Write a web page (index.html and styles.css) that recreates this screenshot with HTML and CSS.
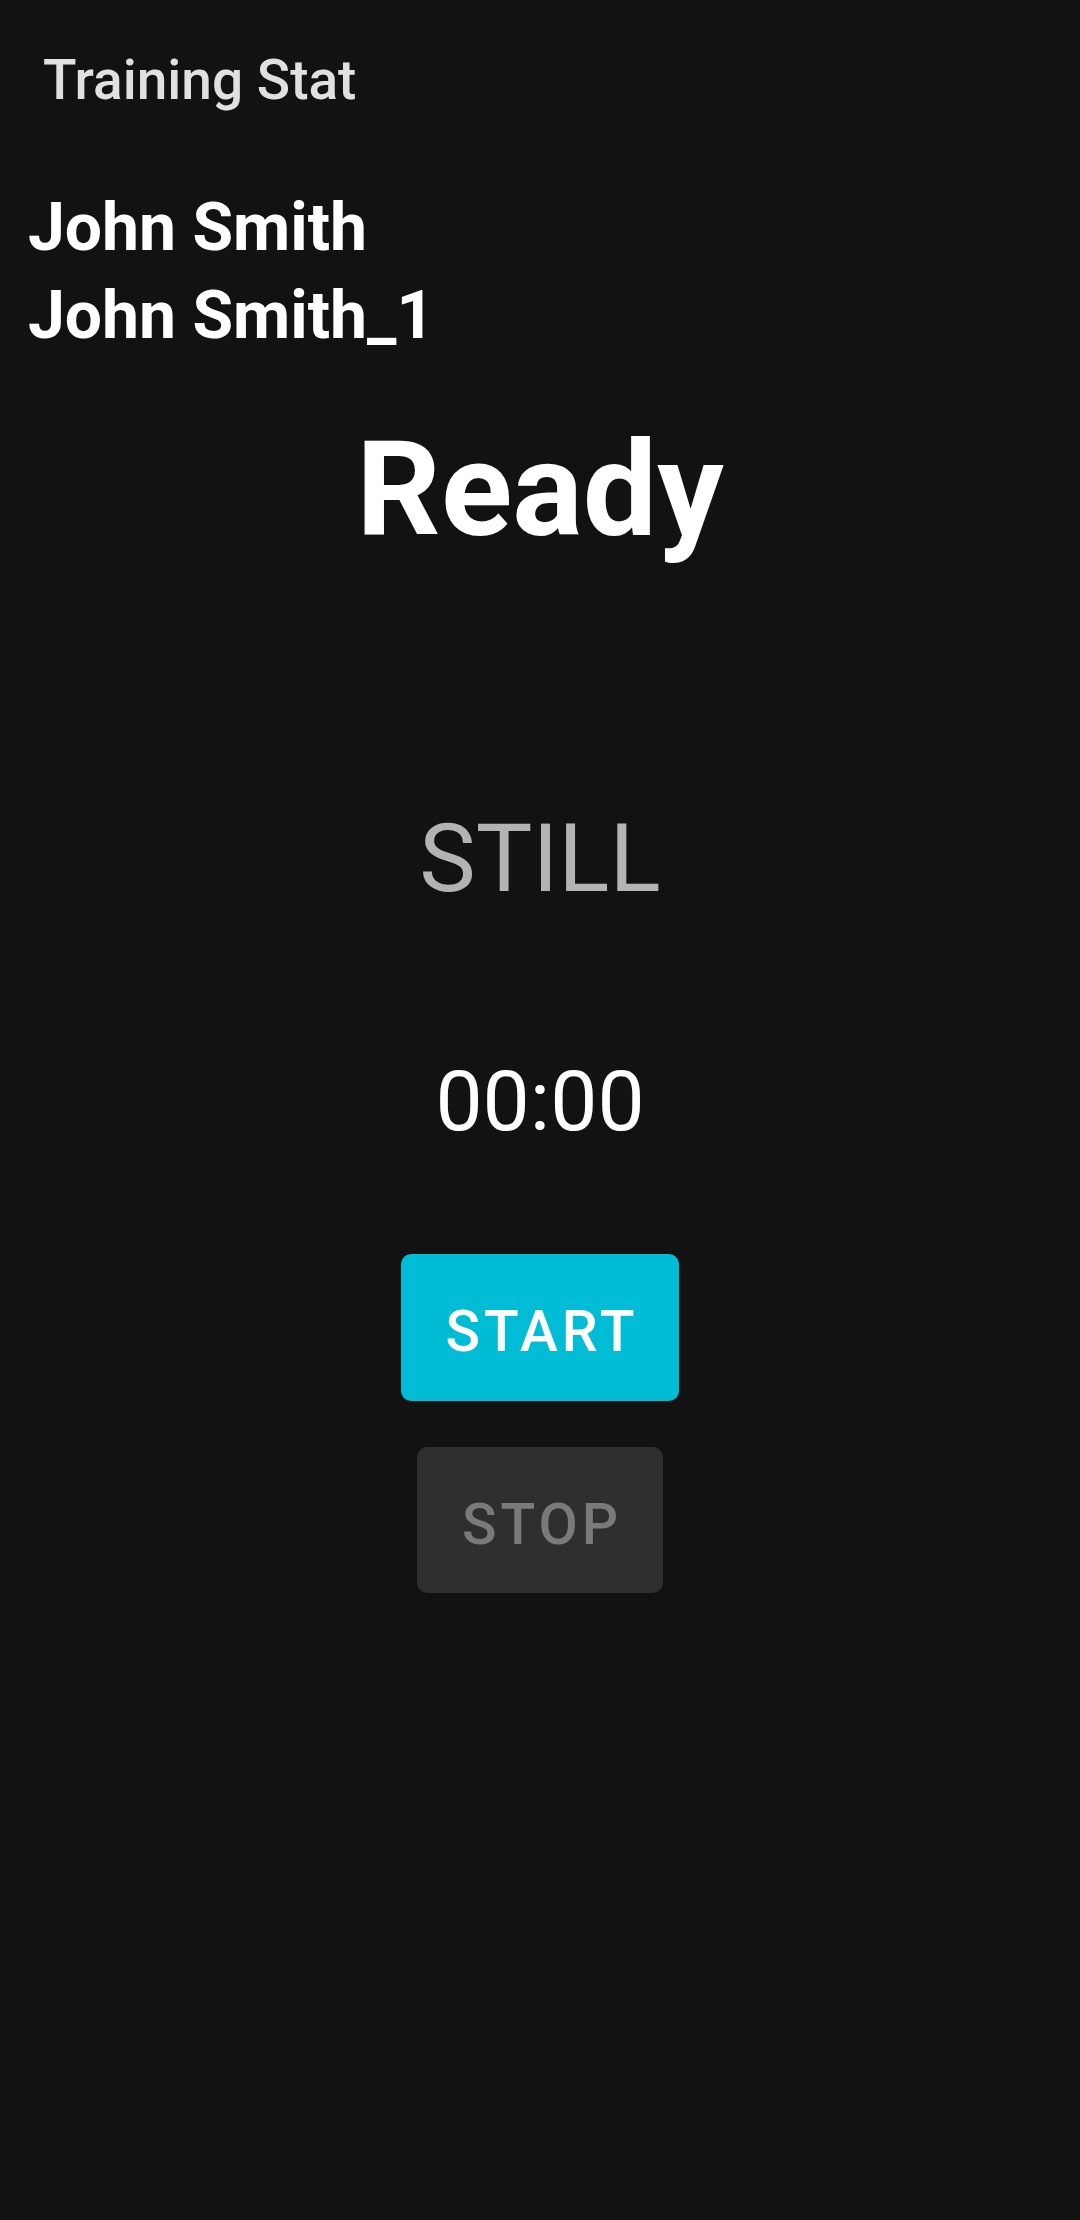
FILE: index.html
```html
<!DOCTYPE html>
<html lang="en">
<head>
<meta charset="utf-8">
<title>Training Stat</title>
<link rel="stylesheet" href="styles.css">
</head>
<body>
<div class="screen">
  <header class="appbar">
    <h1 class="appbar-title">Training Stat</h1>
  </header>
  <section class="names">
    <div class="name">John Smith</div>
    <div class="name">John Smith_1</div>
  </section>
  <main class="panel">
    <div class="status">Ready</div>
    <div class="activity">STILL</div>
    <div class="timer">00:00</div>
    <button class="btn btn-start" type="button">START</button>
    <button class="btn btn-stop" type="button" disabled>STOP</button>
  </main>
</div>
</body>
</html>
```

FILE: styles.css
```css
html, body {
  margin: 0;
  padding: 0;
  background: #121212;
}
body {
  font-family: Roboto, "Noto Sans", "Liberation Sans", sans-serif;
  color: #ffffff;
  width: 1080px;
  min-height: 2220px;
}
.screen {
  display: flex;
  flex-direction: column;
}
.appbar {
  padding: 48px 0 0 43px;
}
.appbar-title {
  margin: 0;
  font-size: 55px;
  font-weight: 500;
  line-height: normal;
  color: #e0e0e0;
}
.names {
  margin-top: 72px;
  padding-left: 28px;
}
.name {
  font-size: 66px;
  font-weight: 700;
  line-height: 88px;
  color: #ffffff;
}
.panel {
  display: flex;
  flex-direction: column;
  align-items: center;
}
.status {
  margin-top: 53px;
  font-size: 132px;
  font-weight: 700;
  line-height: normal;
  color: #ffffff;
}
.activity {
  margin-top: 236px;
  font-size: 95px;
  font-weight: 400;
  line-height: normal;
  color: #b3b3b3;
}
.timer {
  margin-top: 138px;
  font-size: 84px;
  font-weight: 400;
  line-height: normal;
  color: #ffffff;
}
.btn {
  box-sizing: border-box;
  display: flex;
  align-items: center;
  justify-content: center;
  border: none;
  border-radius: 10px;
  font-family: Roboto, "Noto Sans", "Liberation Sans", sans-serif;
  font-size: 57px;
  font-weight: 500;
  letter-spacing: 4px;
  height: 147px;
  padding: 8px 0 0 4px;
}
.btn-start {
  margin-top: 103px;
  width: 278px;
  background: #00bcd4;
  color: #ffffff;
}
.btn-stop {
  margin-top: 46px;
  width: 246px;
  height: 146px;
  background: #2f2f2f;
  color: #7a7a7a;
}
```
